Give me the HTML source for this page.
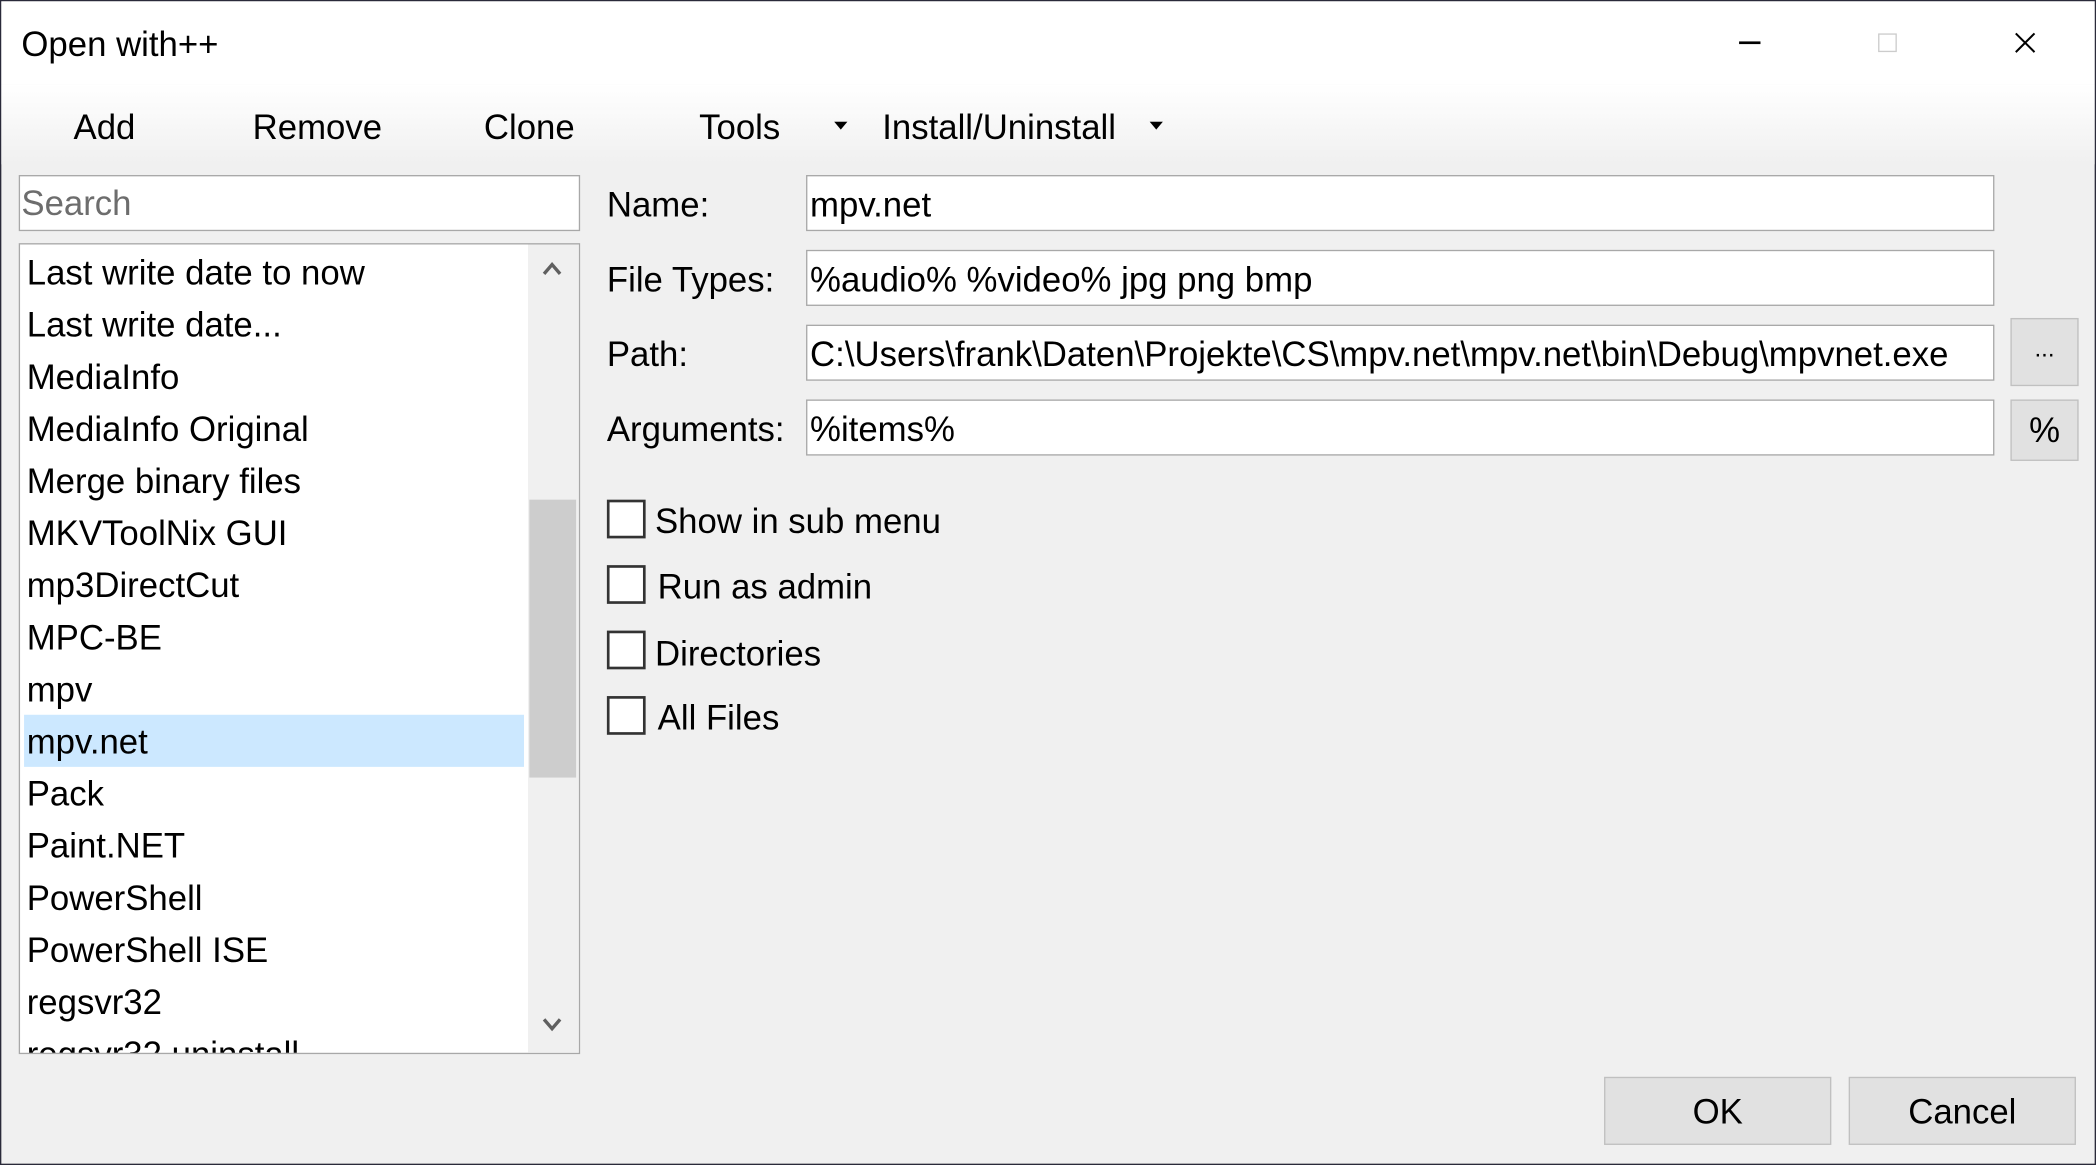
<!DOCTYPE html>
<html><head><meta charset="utf-8"><style>
*{margin:0;padding:0;box-sizing:border-box}
html,body{width:2096px;height:1165px;overflow:hidden;background:#1a1a2a}
#s{position:absolute;left:0;top:0;width:1568px;height:872px;transform:scale(1.33673,1.33601);transform-origin:0 0;background:#f0f0f0;border:1px solid #2a2a3a;font-family:"Liberation Sans",sans-serif;color:#000}
.a{position:absolute;white-space:nowrap}
.t{font-size:26px}
.box{position:absolute;background:#fff;border:1px solid #a8a8a8}
.btn{position:absolute;background:#e1e1e1;border:1px solid #c0c0c0;text-align:center}
.cb{position:absolute;left:453px;width:29px;height:29px;border:2px solid #333;background:#fff}
</style></head><body><div id="s">
<div class="a" style="left:0;top:0;width:1566px;height:62px;background:#fff"></div>
<div class="a" style="left:0;top:62px;width:1566px;height:60px;background:linear-gradient(#fff,#f0f0f0)"></div>
<div class="a" style="left:15px;top:17px;font-size:26px">Open with++</div>
<div class="a" style="left:1300px;top:30px;width:16px;height:2px;background:#000"></div>
<div class="a" style="left:1404px;top:24px;width:14px;height:14px;border:1px solid #ccc"></div>
<svg class="a" style="left:1506px;top:23px" width="16" height="16"><path d="M1 1L15 15M15 1L1 15" stroke="#000" stroke-width="1.5"/></svg>
<div class="a t" style="left:54px;top:79px">Add</div>
<div class="a t" style="left:188px;top:79px">Remove</div>
<div class="a t" style="left:361px;top:79px">Clone</div>
<div class="a t" style="left:522px;top:79px">Tools</div>
<svg class="a" style="left:623px;top:90px" width="10" height="6"><path d="M0 0H10L5 6Z" fill="#000"/></svg>
<div class="a t" style="left:659px;top:79px">Install/Uninstall</div>
<svg class="a" style="left:859px;top:90px" width="10" height="6"><path d="M0 0H10L5 6Z" fill="#000"/></svg>
<div class="box" style="left:13px;top:130px;width:420px;height:42px"></div>
<div class="a t" style="left:15px;top:136px;color:#6d6d6d">Search</div>
<div class="box" style="left:13px;top:181px;width:420px;height:607px;overflow:hidden">
<div class="a" style="left:3px;top:352px;width:374px;height:39px;background:#cce8ff"></div>
<div class="a" style="left:380px;top:0;width:38px;height:605px;background:#f0f0f0"></div>
<div class="a" style="left:381px;top:191px;width:35px;height:208px;background:#cdcdcd"></div>
<svg class="a" style="left:390px;top:12px" width="16" height="12"><path d="M2 10L8 3L14 10" stroke="#606060" stroke-width="2.5" fill="none"/></svg>
<svg class="a" style="left:390px;top:578px" width="16" height="12"><path d="M2 2L8 9L14 2" stroke="#606060" stroke-width="2.5" fill="none"/></svg>
<div class="a t" style="left:5px;top:2px;line-height:39px">Last write date to now<br>Last write date...<br>MediaInfo<br>MediaInfo Original<br>Merge binary files<br>MKVToolNix GUI<br>mp3DirectCut<br>MPC-BE<br>mpv<br>mpv.net<br>Pack<br>Paint.NET<br>PowerShell<br>PowerShell ISE<br>regsvr32<br>regsvr32 uninstall</div>
</div>
<div class="a t" style="left:453px;top:137px">Name:</div>
<div class="a t" style="left:453px;top:193px">File Types:</div>
<div class="a t" style="left:453px;top:249px">Path:</div>
<div class="a t" style="left:453px;top:305px">Arguments:</div>
<div class="box t" style="left:602px;top:130px;width:889px;height:42px;padding:6px 2px">mpv.net</div>
<div class="box t" style="left:602px;top:186px;width:889px;height:42px;padding:6px 2px">%audio% %video% jpg png bmp</div>
<div class="box t" style="left:602px;top:242px;width:889px;height:42px;padding:6px 2px;overflow:hidden">C:\Users\frank\Daten\Projekte\CS\mpv.net\mpv.net\bin\Debug\mpvnet.exe</div>
<div class="box t" style="left:602px;top:298px;width:889px;height:42px;padding:6px 2px">%items%</div>
<div class="btn" style="left:1503px;top:237px;width:51px;height:51px;font-size:18px;line-height:44px">...</div>
<div class="btn t" style="left:1503px;top:298px;width:51px;height:46px;line-height:44px">%</div>
<div class="cb" style="top:373px"></div><div class="a t" style="left:489px;top:374px">Show in sub menu</div>
<div class="cb" style="top:422px"></div><div class="a t" style="left:491px;top:423px">Run as admin</div>
<div class="cb" style="top:471px"></div><div class="a t" style="left:489px;top:473px">Directories</div>
<div class="cb" style="top:520px"></div><div class="a t" style="left:491px;top:521px">All Files</div>
<div class="btn t" style="left:1199px;top:805px;width:170px;height:51px;line-height:50px">OK</div>
<div class="btn t" style="left:1382px;top:805px;width:170px;height:51px;line-height:50px">Cancel</div>
</div></body></html>
